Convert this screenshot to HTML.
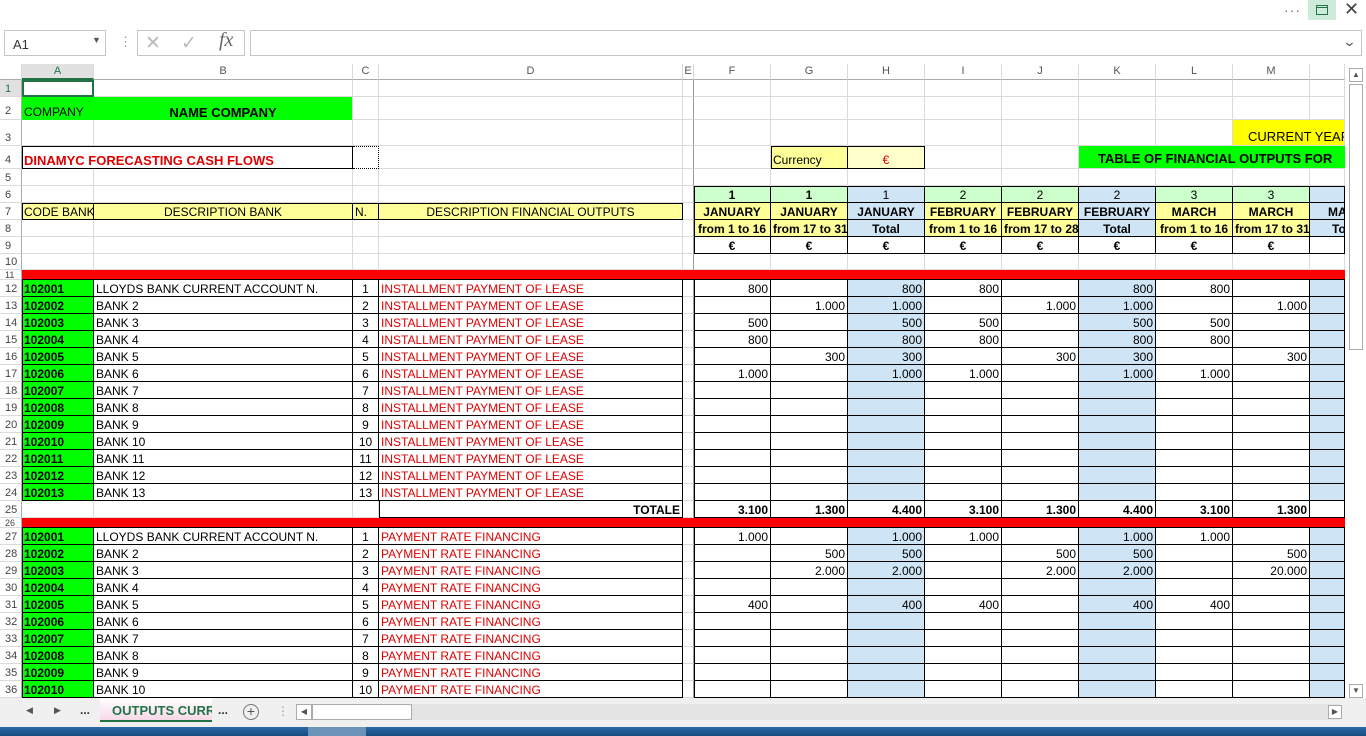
<!DOCTYPE html>
<html><head><meta charset="utf-8"><style>
*{box-sizing:border-box;margin:0;padding:0}
body{width:1366px;height:736px;overflow:hidden;background:#fff;position:relative;font-family:"Liberation Sans",Arial,sans-serif}
.abs{position:absolute}
table{position:absolute;left:0;top:64px;border-collapse:separate;border-spacing:0;table-layout:fixed;width:1345px;font-size:12px;color:#000}
td{padding:0 2px;border-right:1px solid #dadada;border-bottom:1px solid #dadada;white-space:nowrap;overflow:hidden;height:17px;line-height:13px;vertical-align:bottom}
tr.hd td{height:16px;color:#555;text-align:center;font-size:11px;border-bottom:1px solid #ababab;border-right:1px solid #dadada;vertical-align:middle;background:#fff}
tr.r2 td{height:23px;padding-bottom:1px}tr.r3 td{height:26px}tr.r4 td{height:23px;padding-bottom:1px}tr.r10 td{height:16px}
tr.rr td{height:10px;background:#ff0000;border-right:none;border-bottom:1px solid #000;line-height:8px;padding-bottom:0}
tr.rr td.rh{background:#fff;font-size:9px;border-bottom:1px solid #dadada;border-right:1px solid #ababab}
td.rh{color:#444;font-size:11px;text-align:left;padding-left:5px;border-right:1px solid #ababab;background:#fff;vertical-align:bottom}
.k{border-right:1px solid #000!important;border-bottom:1px solid #000!important}
.kl{box-shadow:inset 1px 0 0 #000}.kt{box-shadow:inset 0 1px 0 #000}.klt{box-shadow:inset 1px 1px 0 #000}
.g{background:#00ff00}.bl{background:#cfe4f4}.lg{background:#ccffcc}.ly{background:#ffff99}.ly2{background:#ffffcc}.yy{background:#ffff00}
.b{font-weight:bold}.red{color:#e00000}.ar{text-align:right}.ac{text-align:center}
td.e{border-right:1px solid #9a9a9a}
</style></head><body>
<div class="abs" style="left:1284px;top:2px;font-size:14px;color:#666;letter-spacing:1px">···</div>
<div class="abs" style="left:1308px;top:0;width:28px;height:20px;background:#cdebd8"></div>
<div class="abs" style="left:1316px;top:5px;width:12px;height:10px;border:1px solid #217346"></div>
<div class="abs" style="left:1316px;top:7px;width:12px;height:1px;background:#217346"></div>
<div class="abs" style="left:1344px;top:-1px;font-size:18px;color:#444">✕</div>
<div class="abs" style="left:4px;top:30px;width:102px;height:26px;border:1px solid #c6c6c6;font-size:13px;color:#333;padding:6px 0 0 8px">A1<span style="position:absolute;left:87px;top:4px;font-size:9px;color:#555">▼</span></div>
<div class="abs" style="left:119px;top:34px;color:#999;font-size:13px">⋮</div>
<div class="abs" style="left:137px;top:30px;width:108px;height:26px;border:1px solid #c6c6c6"></div>
<div class="abs" style="left:145px;top:32px;color:#bbb;font-size:19px">✕</div>
<div class="abs" style="left:181px;top:32px;color:#bbb;font-size:19px">✓</div>
<div class="abs" style="left:219px;top:29px;color:#666;font-size:20px;font-style:italic;font-family:'Liberation Serif',serif">fx</div>
<div class="abs" style="left:250px;top:30px;width:1112px;height:26px;border:1px solid #c6c6c6"></div>
<div class="abs" style="left:1344px;top:34px;color:#555;font-size:13px;transform:scaleX(1.3)">⌄</div>
<table>
<colgroup><col style="width:22px"><col style="width:72px"><col style="width:259px"><col style="width:26px"><col style="width:304px"><col style="width:11px"><col style="width:77px"><col style="width:77px"><col style="width:77px"><col style="width:77px"><col style="width:77px"><col style="width:77px"><col style="width:77px"><col style="width:77px"><col style="width:35px"></colgroup>
<tr class="hd"><td></td><td style="background:#e1e1e1;color:#217346;border-bottom:2px solid #217346">A</td><td>B</td><td>C</td><td>D</td><td style="padding:0">E</td><td>F</td><td>G</td><td>H</td><td>I</td><td>J</td><td>K</td><td>L</td><td>M</td><td></td></tr>
<tr><td class="rh" style="background:#e1e1e1;color:#217346">1</td><td style="border:2px solid #217346"></td><td></td><td></td><td></td><td class="e"></td><td></td><td></td><td></td><td></td><td></td><td></td><td></td><td></td><td></td></tr>
<tr class="r2"><td class="rh">2</td><td class="g" style="border-right:none;border-bottom:none">COMPANY</td><td class="g b ac" style="font-size:13px;border-bottom:none">NAME COMPANY</td><td></td><td></td><td class="e"></td><td></td><td></td><td></td><td></td><td></td><td></td><td></td><td></td><td></td></tr>
<tr class="r3"><td class="rh">3</td><td></td><td></td><td></td><td></td><td class="e"></td><td></td><td></td><td></td><td></td><td></td><td></td><td></td><td colspan="2" class="yy" style="font-size:13px;padding-left:15px;line-height:16px">CURRENT YEAR</td></tr>
<tr class="r4"><td class="rh">4</td><td colspan="2" class="k klt red b" style="font-size:13px">DINAMYC FORECASTING CASH FLOWS</td><td style="border:1px dotted #000;border-left:none"></td><td></td><td class="e"></td><td></td><td class="k klt ly">Currency</td><td class="k kt ly2 red ac">€</td><td></td><td></td><td colspan="4" class="g b" style="font-size:13px;padding-left:19px;border-right:none;line-height:16px">TABLE OF FINANCIAL OUTPUTS FOR</td></tr>
<tr><td class="rh">5</td><td></td><td></td><td></td><td></td><td class="e"></td><td></td><td></td><td></td><td></td><td></td><td></td><td></td><td></td><td></td></tr>
<tr><td class="rh">6</td><td></td><td></td><td></td><td></td><td class="e"></td><td class="k klt lg b ac">1</td><td class="k kt lg b ac">1</td><td class="k kt bl ac">1</td><td class="k kt lg ac">2</td><td class="k kt lg ac">2</td><td class="k kt bl ac">2</td><td class="k kt lg ac">3</td><td class="k kt lg ac">3</td><td class="k kt bl"></td></tr>
<tr><td class="rh">7</td><td class="k klt ly" style="padding-left:2px">CODE BANK</td><td class="k kt ly ac">DESCRIPTION BANK</td><td class="k kt ly">N.</td><td class="k kt ly ac">DESCRIPTION FINANCIAL OUTPUTS</td><td class="e"></td><td class="k kl ly b ac">JANUARY</td><td class="k ly b ac">JANUARY</td><td class="k bl b ac">JANUARY</td><td class="k ly b ac">FEBRUARY</td><td class="k ly b ac">FEBRUARY</td><td class="k bl b ac">FEBRUARY</td><td class="k ly b ac">MARCH</td><td class="k ly b ac">MARCH</td><td class="k bl b" style="padding-left:18px">MARCH</td></tr>
<tr><td class="rh">8</td><td></td><td></td><td></td><td></td><td class="e"></td><td class="k kl ly b ac">from 1 to 16</td><td class="k ly b ac">from 17 to 31</td><td class="k bl b ac">Total</td><td class="k ly b ac">from 1 to 16</td><td class="k ly b ac">from 17 to 28</td><td class="k bl b ac">Total</td><td class="k ly b ac">from 1 to 16</td><td class="k ly b ac">from 17 to 31</td><td class="k bl b" style="padding-left:22px">Total</td></tr>
<tr><td class="rh">9</td><td></td><td></td><td></td><td></td><td class="e"></td><td class="k kl b ac">€</td><td class="k b ac">€</td><td class="k b ac">€</td><td class="k b ac">€</td><td class="k b ac">€</td><td class="k b ac">€</td><td class="k b ac">€</td><td class="k b ac">€</td><td class="k"></td></tr>
<tr class="r10"><td class="rh">10</td><td></td><td></td><td></td><td></td><td class="e"></td><td></td><td></td><td></td><td></td><td></td><td></td><td></td><td></td><td></td></tr>
<tr class="rr"><td class="rh">11</td><td></td><td></td><td></td><td></td><td></td><td></td><td></td><td></td><td></td><td></td><td></td><td></td><td></td><td></td></tr>
<tr><td class="rh">12</td><td class="k kl g b">102001</td><td class="k">LLOYDS BANK CURRENT ACCOUNT N.</td><td class="k ac">1</td><td class="k red">INSTALLMENT PAYMENT OF LEASE</td><td class="e"></td><td class="k kl ar">800</td><td class="k"></td><td class="k bl ar">800</td><td class="k ar">800</td><td class="k"></td><td class="k bl ar">800</td><td class="k ar">800</td><td class="k"></td><td class="k bl"></td></tr>
<tr><td class="rh">13</td><td class="k kl g b">102002</td><td class="k">BANK 2</td><td class="k ac">2</td><td class="k red">INSTALLMENT PAYMENT OF LEASE</td><td class="e"></td><td class="k kl"></td><td class="k ar">1.000</td><td class="k bl ar">1.000</td><td class="k"></td><td class="k ar">1.000</td><td class="k bl ar">1.000</td><td class="k"></td><td class="k ar">1.000</td><td class="k bl"></td></tr>
<tr><td class="rh">14</td><td class="k kl g b">102003</td><td class="k">BANK 3</td><td class="k ac">3</td><td class="k red">INSTALLMENT PAYMENT OF LEASE</td><td class="e"></td><td class="k kl ar">500</td><td class="k"></td><td class="k bl ar">500</td><td class="k ar">500</td><td class="k"></td><td class="k bl ar">500</td><td class="k ar">500</td><td class="k"></td><td class="k bl"></td></tr>
<tr><td class="rh">15</td><td class="k kl g b">102004</td><td class="k">BANK 4</td><td class="k ac">4</td><td class="k red">INSTALLMENT PAYMENT OF LEASE</td><td class="e"></td><td class="k kl ar">800</td><td class="k"></td><td class="k bl ar">800</td><td class="k ar">800</td><td class="k"></td><td class="k bl ar">800</td><td class="k ar">800</td><td class="k"></td><td class="k bl"></td></tr>
<tr><td class="rh">16</td><td class="k kl g b">102005</td><td class="k">BANK 5</td><td class="k ac">5</td><td class="k red">INSTALLMENT PAYMENT OF LEASE</td><td class="e"></td><td class="k kl"></td><td class="k ar">300</td><td class="k bl ar">300</td><td class="k"></td><td class="k ar">300</td><td class="k bl ar">300</td><td class="k"></td><td class="k ar">300</td><td class="k bl"></td></tr>
<tr><td class="rh">17</td><td class="k kl g b">102006</td><td class="k">BANK 6</td><td class="k ac">6</td><td class="k red">INSTALLMENT PAYMENT OF LEASE</td><td class="e"></td><td class="k kl ar">1.000</td><td class="k"></td><td class="k bl ar">1.000</td><td class="k ar">1.000</td><td class="k"></td><td class="k bl ar">1.000</td><td class="k ar">1.000</td><td class="k"></td><td class="k bl"></td></tr>
<tr><td class="rh">18</td><td class="k kl g b">102007</td><td class="k">BANK 7</td><td class="k ac">7</td><td class="k red">INSTALLMENT PAYMENT OF LEASE</td><td class="e"></td><td class="k kl"></td><td class="k"></td><td class="k bl"></td><td class="k"></td><td class="k"></td><td class="k bl"></td><td class="k"></td><td class="k"></td><td class="k bl"></td></tr>
<tr><td class="rh">19</td><td class="k kl g b">102008</td><td class="k">BANK 8</td><td class="k ac">8</td><td class="k red">INSTALLMENT PAYMENT OF LEASE</td><td class="e"></td><td class="k kl"></td><td class="k"></td><td class="k bl"></td><td class="k"></td><td class="k"></td><td class="k bl"></td><td class="k"></td><td class="k"></td><td class="k bl"></td></tr>
<tr><td class="rh">20</td><td class="k kl g b">102009</td><td class="k">BANK 9</td><td class="k ac">9</td><td class="k red">INSTALLMENT PAYMENT OF LEASE</td><td class="e"></td><td class="k kl"></td><td class="k"></td><td class="k bl"></td><td class="k"></td><td class="k"></td><td class="k bl"></td><td class="k"></td><td class="k"></td><td class="k bl"></td></tr>
<tr><td class="rh">21</td><td class="k kl g b">102010</td><td class="k">BANK 10</td><td class="k ac">10</td><td class="k red">INSTALLMENT PAYMENT OF LEASE</td><td class="e"></td><td class="k kl"></td><td class="k"></td><td class="k bl"></td><td class="k"></td><td class="k"></td><td class="k bl"></td><td class="k"></td><td class="k"></td><td class="k bl"></td></tr>
<tr><td class="rh">22</td><td class="k kl g b">102011</td><td class="k">BANK 11</td><td class="k ac">11</td><td class="k red">INSTALLMENT PAYMENT OF LEASE</td><td class="e"></td><td class="k kl"></td><td class="k"></td><td class="k bl"></td><td class="k"></td><td class="k"></td><td class="k bl"></td><td class="k"></td><td class="k"></td><td class="k bl"></td></tr>
<tr><td class="rh">23</td><td class="k kl g b">102012</td><td class="k">BANK 12</td><td class="k ac">12</td><td class="k red">INSTALLMENT PAYMENT OF LEASE</td><td class="e"></td><td class="k kl"></td><td class="k"></td><td class="k bl"></td><td class="k"></td><td class="k"></td><td class="k bl"></td><td class="k"></td><td class="k"></td><td class="k bl"></td></tr>
<tr><td class="rh">24</td><td class="k kl g b">102013</td><td class="k">BANK 13</td><td class="k ac">13</td><td class="k red">INSTALLMENT PAYMENT OF LEASE</td><td class="e"></td><td class="k kl"></td><td class="k"></td><td class="k bl"></td><td class="k"></td><td class="k"></td><td class="k bl"></td><td class="k"></td><td class="k"></td><td class="k bl"></td></tr>
<tr><td class="rh">25</td><td></td><td></td><td></td><td class="k kl b ar">TOTALE</td><td class="e"></td><td class="k kl b ar">3.100</td><td class="k b ar">1.300</td><td class="k b ar">4.400</td><td class="k b ar">3.100</td><td class="k b ar">1.300</td><td class="k b ar">4.400</td><td class="k b ar">3.100</td><td class="k b ar">1.300</td><td class="k"></td></tr>
<tr class="rr"><td class="rh">26</td><td></td><td></td><td></td><td></td><td></td><td></td><td></td><td></td><td></td><td></td><td></td><td></td><td></td><td></td></tr>
<tr><td class="rh">27</td><td class="k kl g b">102001</td><td class="k">LLOYDS BANK CURRENT ACCOUNT N.</td><td class="k ac">1</td><td class="k red">PAYMENT RATE FINANCING</td><td class="e"></td><td class="k kl ar">1.000</td><td class="k"></td><td class="k bl ar">1.000</td><td class="k ar">1.000</td><td class="k"></td><td class="k bl ar">1.000</td><td class="k ar">1.000</td><td class="k"></td><td class="k bl"></td></tr>
<tr><td class="rh">28</td><td class="k kl g b">102002</td><td class="k">BANK 2</td><td class="k ac">2</td><td class="k red">PAYMENT RATE FINANCING</td><td class="e"></td><td class="k kl"></td><td class="k ar">500</td><td class="k bl ar">500</td><td class="k"></td><td class="k ar">500</td><td class="k bl ar">500</td><td class="k"></td><td class="k ar">500</td><td class="k bl"></td></tr>
<tr><td class="rh">29</td><td class="k kl g b">102003</td><td class="k">BANK 3</td><td class="k ac">3</td><td class="k red">PAYMENT RATE FINANCING</td><td class="e"></td><td class="k kl"></td><td class="k ar">2.000</td><td class="k bl ar">2.000</td><td class="k"></td><td class="k ar">2.000</td><td class="k bl ar">2.000</td><td class="k"></td><td class="k ar">20.000</td><td class="k bl"></td></tr>
<tr><td class="rh">30</td><td class="k kl g b">102004</td><td class="k">BANK 4</td><td class="k ac">4</td><td class="k red">PAYMENT RATE FINANCING</td><td class="e"></td><td class="k kl"></td><td class="k"></td><td class="k bl"></td><td class="k"></td><td class="k"></td><td class="k bl"></td><td class="k"></td><td class="k"></td><td class="k bl"></td></tr>
<tr><td class="rh">31</td><td class="k kl g b">102005</td><td class="k">BANK 5</td><td class="k ac">5</td><td class="k red">PAYMENT RATE FINANCING</td><td class="e"></td><td class="k kl ar">400</td><td class="k"></td><td class="k bl ar">400</td><td class="k ar">400</td><td class="k"></td><td class="k bl ar">400</td><td class="k ar">400</td><td class="k"></td><td class="k bl"></td></tr>
<tr><td class="rh">32</td><td class="k kl g b">102006</td><td class="k">BANK 6</td><td class="k ac">6</td><td class="k red">PAYMENT RATE FINANCING</td><td class="e"></td><td class="k kl"></td><td class="k"></td><td class="k bl"></td><td class="k"></td><td class="k"></td><td class="k bl"></td><td class="k"></td><td class="k"></td><td class="k bl"></td></tr>
<tr><td class="rh">33</td><td class="k kl g b">102007</td><td class="k">BANK 7</td><td class="k ac">7</td><td class="k red">PAYMENT RATE FINANCING</td><td class="e"></td><td class="k kl"></td><td class="k"></td><td class="k bl"></td><td class="k"></td><td class="k"></td><td class="k bl"></td><td class="k"></td><td class="k"></td><td class="k bl"></td></tr>
<tr><td class="rh">34</td><td class="k kl g b">102008</td><td class="k">BANK 8</td><td class="k ac">8</td><td class="k red">PAYMENT RATE FINANCING</td><td class="e"></td><td class="k kl"></td><td class="k"></td><td class="k bl"></td><td class="k"></td><td class="k"></td><td class="k bl"></td><td class="k"></td><td class="k"></td><td class="k bl"></td></tr>
<tr><td class="rh">35</td><td class="k kl g b">102009</td><td class="k">BANK 9</td><td class="k ac">9</td><td class="k red">PAYMENT RATE FINANCING</td><td class="e"></td><td class="k kl"></td><td class="k"></td><td class="k bl"></td><td class="k"></td><td class="k"></td><td class="k bl"></td><td class="k"></td><td class="k"></td><td class="k bl"></td></tr>
<tr><td class="rh">36</td><td class="k kl g b">102010</td><td class="k">BANK 10</td><td class="k ac">10</td><td class="k red">PAYMENT RATE FINANCING</td><td class="e"></td><td class="k kl"></td><td class="k"></td><td class="k bl"></td><td class="k"></td><td class="k"></td><td class="k bl"></td><td class="k"></td><td class="k"></td><td class="k bl"></td></tr>
</table>
<div class="abs" style="left:1345px;top:64px;width:21px;height:636px;background:#fff"></div>
<div class="abs" style="left:1349px;top:68px;width:14px;height:14px;border:1px solid #ababab;font-size:8px;color:#555;text-align:center;line-height:12px">▲</div>
<div class="abs" style="left:1349px;top:84px;width:14px;height:266px;border:1px solid #ababab;background:#fff"></div>
<div class="abs" style="left:1349px;top:684px;width:14px;height:14px;border:1px solid #ababab;font-size:8px;color:#555;text-align:center;line-height:12px">▼</div>
<div class="abs" style="left:0;top:698px;width:1366px;height:30px;background:#f0f0f0"></div>
<div class="abs" style="left:26px;top:705px;font-size:9px;color:#555">◀</div>
<div class="abs" style="left:54px;top:705px;font-size:9px;color:#555">▶</div>
<div class="abs" style="left:80px;top:703px;font-size:12px;color:#333;font-weight:bold">...</div>
<div class="abs" style="left:100px;top:698px;width:112px;height:24px;background:linear-gradient(#fff,#f8d8e8);border-bottom:2px solid #217346;font-size:13px;font-weight:bold;color:#217346;padding:5px 0 0 12px;overflow:hidden;white-space:nowrap">OUTPUTS CURRENT</div>
<div class="abs" style="left:218px;top:703px;font-size:12px;color:#333;font-weight:bold">...</div>
<div class="abs" style="left:243px;top:704px;width:16px;height:16px;border:1px solid #777;border-radius:50%;font-size:14px;line-height:13px;text-align:center;color:#555">+</div>
<div class="abs" style="left:277px;top:704px;color:#999;font-size:12px">⋮</div>
<div class="abs" style="left:296px;top:704px;width:1044px;height:16px;background:#e4e4e4"></div>
<div class="abs" style="left:296px;top:704px;width:16px;height:16px;border:1px solid #ababab;background:#fff;font-size:8px;line-height:14px;text-align:center;color:#555">◀</div>
<div class="abs" style="left:312px;top:704px;width:100px;height:16px;border:1px solid #ababab;background:#fff"></div>
<div class="abs" style="left:1328px;top:705px;width:14px;height:14px;border:1px solid #ababab;background:#fff;font-size:8px;line-height:12px;text-align:center;color:#555">▶</div>
<div class="abs" style="left:0;top:727px;width:1366px;height:9px;background:linear-gradient(#2a6aa8,#174b80)"></div>
<div class="abs" style="left:308px;top:727px;width:58px;height:9px;background:#6d93b8"></div>
</body></html>
